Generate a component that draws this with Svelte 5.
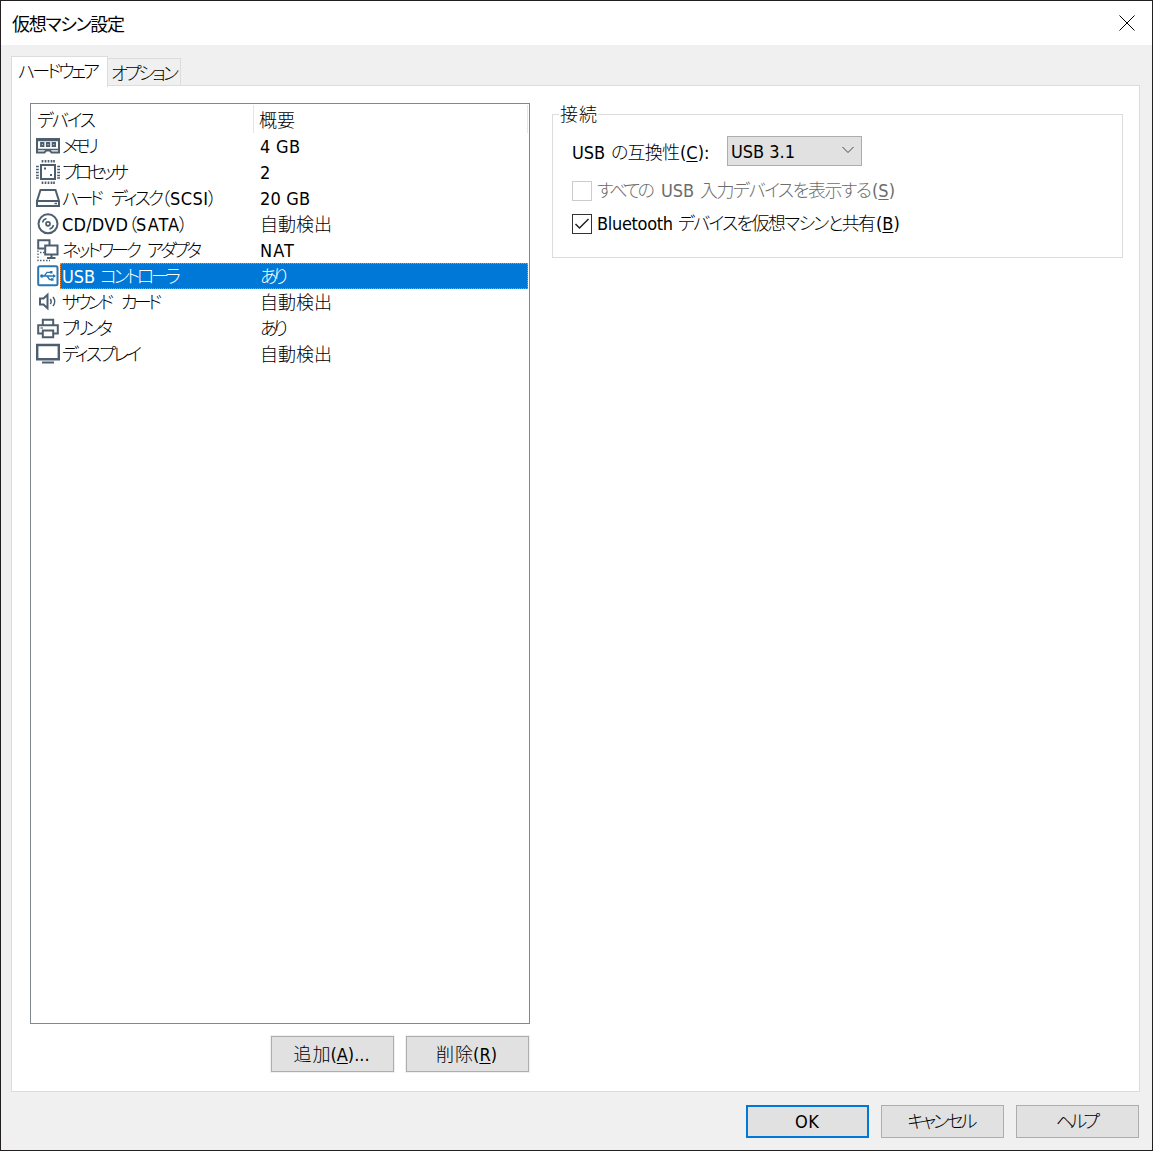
<script lang="ts">
	type Run = [string, number];

	// each run is a piece of text and the width it takes
	const devices: Array<{ icon: string; name: Run[]; summary: Run }> = [
		{ icon: 'memory', name: [['メモリ', 37]], summary: ['4 GB', 40] },
		{ icon: 'cpu', name: [['プロセッサ', 67]], summary: ['2', 11] },
		{ icon: 'disk', name: [['ハード', 42], [' ', 7], ['ディスク（', 59], ['SCSI', 38], ['）', 8]], summary: ['20 GB', 50] },
		{ icon: 'cd', name: [['CD/DVD', 66], ['（', 8], ['SATA', 43], ['）', 8]], summary: ['自動検出', 72] },
		{ icon: 'network', name: [['ネットワーク', 80], [' ', 5], ['アダプタ', 55]], summary: ['NAT', 34] },
		{ icon: 'usb', name: [['USB', 33], [' ', 5], ['コントローラ', 81]], summary: ['あり', 28] },
		{ icon: 'sound', name: [['サウンド', 52], [' ', 7], ['カード', 41]], summary: ['自動検出', 72] },
		{ icon: 'printer', name: [['プリンタ', 51]], summary: ['あり', 28] },
		{ icon: 'display', name: [['ディスプレイ', 80]], summary: ['自動検出', 72] }
	];

	let selected = $state('usb');
	let shareBluetooth = $state(true);

	// spread the letters of a label over a fixed width
	function fit(node: HTMLElement, width: number) {
		const natural = node.getBoundingClientRect().width;
		const gaps = Math.max((node.textContent ?? '').length - 1, 1);
		node.style.letterSpacing = `${(width - natural) / gaps}px`;
		node.style.width = `${width}px`;
	}
</script>

{#snippet label(text: string, width: number)}<span class="fit" use:fit={width}>{text}</span>{/snippet}

{#snippet deviceIcon(name: string)}
	<svg class="icon" class:usb={name === 'usb'} width="24" height="24" viewBox="0 0 24 24">
		{#if name === 'memory'}
			<path d="M1 5H23V18.500H15.500L14 16.500H10L8.500 18.500H1Z" stroke-width="2" />
			<path d="M1 15.500H23M1 6.500H23" stroke-width="1.400" />
			<path d="M5 9H7.500V12H5ZM10.800 9H13.300V12H10.800ZM16.600 9H19.100V12H16.600Z" stroke-width="1.800" />
		{:else if name === 'cpu'}
			<rect x="5" y="5" width="14" height="14" stroke-width="2" />
			<path d="M6.500 0V2.500M9.500 0V2.500M12.500 0V2.500M15.500 0V2.500M18 0V2.500M6.500 21.500V24M9.500 21.500V24M12.500 21.500V24M15.500 21.500V24M18 21.500V24M0 6.500H2.800M0 9.500H2.800M0 12.500H2.800M0 15.500H2.800M0 18H2.800M21.200 6.500H24M21.200 9.500H24M21.200 12.500H24M21.200 15.500H24M21.200 18H24" stroke-width="1.700" />
			<path class="solid" d="M8 7.500H10V9.500H8ZM14 14H16V16H14Z" />
		{:else if name === 'disk'}
			<path d="M1 15L4.500 4H19.500L23 15V20H1V15H23" />
			<path d="M18.500 17.500H21" stroke-width="1.500" />
		{:else if name === 'cd'}
			<circle cx="12" cy="11.800" r="9.500" />
			<circle cx="12" cy="11.800" r="2" stroke-width="1.700" />
			<path d="M6.500 10.500Q7.300 7.300 10.500 6.500M17.500 13Q16.700 16.300 13.500 17.100" stroke-width="1.500" />
		{:else if name === 'network'}
			<path d="M8.500 10.500H2.200V2.300H13.500V7" />
			<path d="M9.200 7.500H21.500V16.500H9.200ZM15.500 16.500V19.500M11 20H19.500" />
			<path d="M2 12.500V22.500H14M4 14.500H9" stroke-width="1.300" stroke-dasharray="1.500 1.500" />
		{:else if name === 'usb'}
			<rect x="2.200" y="2.200" width="19.300" height="19" rx="1.500" />
			<path d="M6 12H18.500M8.300 12L11 8.300H14M11 12L13.500 15.500H16" stroke-width="1.300" />
			<path class="solid" d="M17 10L20 12L17 14ZM14 7H16.500V9.500H14ZM15 14.200H17.500V16.700H15Z" />
			<circle class="solid" cx="5.800" cy="12" r="1.700" />
		{:else if name === 'sound'}
			<path d="M4 8.500H7.500L11.500 4.800V18.200L7.500 14.500H4Z" />
			<path d="M14.300 9Q16 11.500 14.300 14M17 7Q20.500 11.500 17 16" stroke-width="1.500" />
		{:else if name === 'printer'}
			<path d="M6.800 9V3.800H17.200V9M6.500 17.500H2.200V9.300H21.800V17.500H17.500M6.800 14.500H17.200V21.200H6.800Z" />
			<path d="M4.500 12H7" stroke-width="1.200" />
		{:else}
			<path d="M1.200 3H22.800V17.300H1.200Z" stroke-width="2.400" />
			<path d="M6 20.500H18" stroke-width="2" />
		{/if}
	</svg>
{/snippet}

<div class="dialog">
	<header class="title-bar">
		<span class="title">{@render label('仮想マシン設定', 113)}</span>
		<button class="close" aria-label="閉じる">
			<svg width="16" height="16" viewBox="0 0 16 16"><path d="M.5 .5L15.500 15.500M15.500 .5L.5 15.500" /></svg>
		</button>
	</header>

	<nav class="tabs">
		<button class="tab active">{@render label('ハードウェア', 82)}</button>
		<button class="tab">{@render label('オプション', 68)}</button>
	</nav>

	<main class="page">
		<section class="left">
			<div class="list">
				<div class="list-header">
					<span class="col-device">{@render label('デバイス', 59)}</span>
					<span class="col-summary">{@render label('概要', 36)}</span>
				</div>
				{#each devices as device}
					<div class="row">
						{@render deviceIcon(device.icon)}
						<button class="row-text" class:selected={selected === device.icon} onclick={() => (selected = device.icon)}>
							<span class="name">{#each device.name as [text, width]}{@render label(text, width)}{/each}</span>
							<span class="summary">{@render label(device.summary[0], device.summary[1])}</span>
						</button>
					</div>
				{/each}
			</div>
			<div class="list-actions">
				<button class="btn tall">{@render label('追加', 37)}(<u>A</u>)...</button>
				<button class="btn tall">{@render label('削除', 37)}(<u>R</u>)</button>
			</div>
		</section>

		<fieldset class="group">
			<legend>{@render label('接続', 37)}</legend>
			<div class="field">
				<span class="field-label">{@render label('USB', 33)}<i></i>{@render label('の互換性', 69)}(<u>C</u>):</span>
				<button class="select">
					{@render label('USB 3.1', 64)}
					<svg width="12" height="8" viewBox="0 0 12 8"><path d="M.5 1L6 6.500L11.500 1" /></svg>
				</button>
			</div>
			<label class="check disabled">
				<span class="box"></span>
				<span>{@render label('すべての', 58)}<i></i>{@render label('USB', 33)}<i></i>{@render label('入力デバイスを表示する', 172)}(<u>S</u>)</span>
			</label>
			<label class="check">
				<input type="checkbox" bind:checked={shareBluetooth} />
				<span class="box">
					{#if shareBluetooth}
						<svg width="16" height="16" viewBox="0 0 16 16"><path d="M1.500 8L5.500 12L14.500 3" /></svg>
					{/if}
				</span>
				<span>{@render label('Bluetooth', 76)}<i class="narrow"></i>{@render label('デバイスを仮想マシンと共有', 198)}(<u>B</u>)</span>
			</label>
		</fieldset>
	</main>

	<footer class="footer">
		<button class="btn default">{@render label('OK', 24)}</button>
		<button class="btn">{@render label('キャンセル', 70)}</button>
		<button class="btn">{@render label('ヘルプ', 44)}</button>
	</footer>
</div>

<style>
	:global(body) {
		margin: 0;
	}

	.dialog {
		box-sizing: border-box;
		width: 1153px;
		height: 1151px;
		display: flex;
		flex-direction: column;
		border: 1px solid #231f20;
		background: #f0f0f0;
		color: #000;
		font-family: 'DejaVu Sans Condensed', 'Noto Sans CJK JP', sans-serif;
		font-size: 18px;
		font-weight: 300;
		line-height: 26px;
		font-feature-settings: 'palt';
	}

	button {
		padding: 0;
		border: 0;
		background: none;
		color: inherit;
		font: inherit;
		font-feature-settings: inherit;
	}

	.fit {
		display: inline-block;
		white-space: pre;
	}

	u {
		text-decoration-thickness: 1px;
		text-underline-offset: 2px;
	}

	i {
		display: inline-block;
		width: 6px;
	}

	i.narrow {
		width: 5px;
	}

	.title-bar {
		box-sizing: border-box;
		height: 44px;
		display: flex;
		align-items: center;
		justify-content: space-between;
		padding: 0 17px 1px 11px;
		background: #fff;
	}

	.title {
		font-family: 'Noto Sans CJK JP', sans-serif;
		font-weight: 400;
	}

	.close {
		height: 16px;
	}

	svg {
		display: block;
		fill: none;
		stroke: #000;
	}

	.tabs {
		height: 41px;
		box-sizing: border-box;
		display: flex;
		align-items: flex-end;
		padding-left: 10px;
	}

	.tab {
		box-sizing: border-box;
		height: 28px;
		width: 73px;
		border: 1px solid #dcdcdc;
		border-width: 1px 1px 0 0;
		text-align: left;
		padding: 2px 0 0 3px;
		line-height: 25px;
	}

	.tab.active {
		width: 97px;
		height: 31px;
		margin-bottom: -1px;
		padding: 0 0 1px 6px;
		border-left-width: 1px;
		background: #fff;
		z-index: 1;
	}

	.page {
		box-sizing: border-box;
		width: 1129px;
		height: 1007px;
		margin-left: 10px;
		margin-top: -1px;
		display: flex;
		gap: 22px;
		padding: 17px 16px 0 18px;
		border: 1px solid #dcdcdc;
		background: #fff;
	}

	.list {
		box-sizing: border-box;
		width: 500px;
		height: 921px;
		border: 1px solid #828790;
	}

	.list-header {
		height: 28px;
		display: flex;
		margin: 1px 1px 0 0;
		line-height: 31px;
	}

	.col-device {
		box-sizing: border-box;
		width: 223px;
		padding-left: 6px;
		border-right: 1px solid #e5e5e5;
	}

	.col-summary {
		flex: 1;
		padding-left: 5px;
		border-right: 1px solid #e5e5e5;
	}

	.row {
		height: 26px;
		display: flex;
		align-items: center;
		padding: 0 1px 0 5px;
	}

	.icon {
		stroke: #4d5f6e;
		stroke-width: 2;
	}

	.icon.usb {
		stroke: #2876b4;
	}

	.icon .solid {
		fill: #4d5f6e;
		stroke: none;
	}

	.icon.usb .solid {
		fill: #2876b4;
	}

	.row-text {
		box-sizing: border-box;
		flex: 1;
		height: 26px;
		display: flex;
		line-height: 26px;
		padding-left: 1px;
		border: 1px solid transparent;
		text-align: left;
	}

	.row-text.selected {
		border: 1px dotted #ff8728;
		background: #0078d7;
		color: #fff;
	}

	.name {
		width: 198px;
		white-space: nowrap;
	}

	.list-actions {
		display: flex;
		justify-content: flex-end;
		gap: 12px;
		margin: 12px 1px 0 0;
	}

	.btn {
		box-sizing: border-box;
		width: 123px;
		height: 33px;
		padding: 1px 3px 0 0;
		border: 1px solid #adadad;
		background: #e1e1e1;
	}

	.btn.tall {
		height: 36px;
		padding: 2px 2px 0 0;
		box-shadow: 0 0 0 1px #f0f0f0;
	}

	.btn.default {
		padding: 0 1px 0 0;
		border: 2px solid #0078d7;
	}

	.group {
		box-sizing: border-box;
		width: 571px;
		height: 157px;
		margin: -2px 0 0;
		padding: 9px 0 0 19px;
		border: 1px solid #dcdcdc;
	}

	legend {
		height: 26px;
		margin-left: -13px;
		padding: 0 1px;
		line-height: 28px;
	}

	.field {
		display: flex;
		align-items: center;
	}

	.field-label {
		width: 155px;
		white-space: nowrap;
		padding-top: 3px;
		box-sizing: border-box;
	}

	.select {
		box-sizing: border-box;
		width: 135px;
		height: 30px;
		display: flex;
		align-items: center;
		justify-content: space-between;
		padding: 1px 7px 0 3px;
		border: 1px solid #adadad;
		background: #e1e1e1;
	}

	.select svg {
		margin-bottom: 3px;
		stroke: #444;
	}

	.check {
		height: 33px;
		display: flex;
		align-items: center;
		gap: 5px;
		white-space: nowrap;
		line-height: 28px;
	}

	.field + .check {
		margin-top: 8px;
	}

	.check input {
		display: none;
	}

	.box {
		box-sizing: border-box;
		width: 20px;
		height: 20px;
		padding: 1px;
		border: 1px solid #333;
	}

	.box svg {
		stroke: #222;
		stroke-width: 1.5;
	}

	.disabled {
		color: #6d6d6d;
	}

	.disabled .box {
		border-color: #ccc;
	}

	.footer {
		display: flex;
		justify-content: flex-end;
		gap: 12px;
		padding: 13px 13px 0 0;
	}
</style>
